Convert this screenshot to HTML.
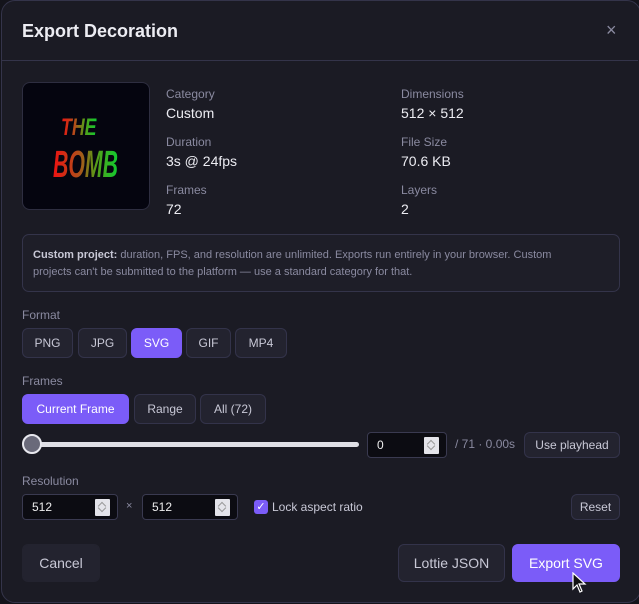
<!DOCTYPE html>
<html><head><meta charset="utf-8"><style>
*{box-sizing:border-box;margin:0;padding:0}
body{width:639px;height:604px;background:#14141b;font-family:"Liberation Sans",sans-serif;overflow:hidden;position:relative}
.dlg{position:absolute;left:1px;top:0;width:640px;height:603px;background:#1b1b24;border:1px solid #34344a;border-radius:14px}
.a{position:absolute;white-space:nowrap}
.lbl{color:#8a8aa0;font-size:12px}
.val{color:#ececf2;font-size:14px}
.btn{position:absolute;background:#23232f;border:1px solid #33334a;border-radius:6px;color:#c8c8d6;font-size:12px;display:flex;align-items:center;justify-content:center}
.on{background:#7b5cf8;border-color:#7b5cf8;color:#fff}
.inp{position:absolute;background:#0c0c12;border:1px solid #3a3a50;border-radius:4px;color:#eee;font-size:12px;padding-left:9px;display:flex;align-items:center}
.spin{position:absolute;right:7px;top:4px;width:15px;height:17px;background:#e4e4ea;border-radius:1px}
.spin:before,.spin:after{content:"";position:absolute;left:4px;width:5px;height:5px;border-left:1px solid #999;border-top:1px solid #999}
.spin:before{top:4px;transform:rotate(45deg)}
.spin:after{top:6px;transform:rotate(225deg)}
.grad{background:linear-gradient(90deg,#ee1111,#b0501a 40%,#5a9a18 65%,#10cc30);-webkit-background-clip:text;background-clip:text;color:transparent;font-weight:bold;font-style:italic;transform-origin:left top}
</style></head><body>
<div class="dlg"></div>
<div class="a" style="left:22px;top:21px;font-size:18px;font-weight:bold;color:#ececf2">Export Decoration</div>
<div class="a" style="left:606px;top:20px;font-size:18px;color:#8a8aa0">×</div>
<div class="a" style="left:2px;top:60px;width:636px;height:1px;background:#34344a"></div>

<div class="a" style="left:22px;top:82px;width:128px;height:128px;background:#05050f;border:1px solid #2e2e40;border-radius:8px"></div>
<div class="a grad" style="left:61px;top:114px;font-size:24px;transform:scaleX(0.74)">THE</div>
<div class="a grad" style="left:53px;top:144px;font-size:38px;transform:scaleX(0.56)">BOMB</div>

<div class="a lbl" style="left:166px;top:87px">Category</div>
<div class="a val" style="left:166px;top:105px">Custom</div>
<div class="a lbl" style="left:166px;top:135px">Duration</div>
<div class="a val" style="left:166px;top:153px">3s @ 24fps</div>
<div class="a lbl" style="left:166px;top:183px">Frames</div>
<div class="a val" style="left:166px;top:201px">72</div>
<div class="a lbl" style="left:401px;top:87px">Dimensions</div>
<div class="a val" style="left:401px;top:105px">512 × 512</div>
<div class="a lbl" style="left:401px;top:135px">File Size</div>
<div class="a val" style="left:401px;top:153px">70.6 KB</div>
<div class="a lbl" style="left:401px;top:183px">Layers</div>
<div class="a val" style="left:401px;top:201px">2</div>

<div class="a" style="left:22px;top:234px;width:598px;height:58px;border:1px solid #34344a;border-radius:7px;background:#1e1e28;padding:12px 40px 12px 10px;font-size:11px;line-height:17px;color:#8a8aa0;white-space:normal"><b style="color:#c8c8d6">Custom project:</b> duration, FPS, and resolution are unlimited. Exports run entirely in your browser. Custom projects can't be submitted to the platform — use a standard category for that.</div>

<div class="a lbl" style="left:22px;top:308px">Format</div>
<div class="btn" style="left:22px;top:328px;width:51px;height:30px">PNG</div>
<div class="btn" style="left:78px;top:328px;width:49px;height:30px">JPG</div>
<div class="btn on" style="left:131px;top:328px;width:51px;height:30px">SVG</div>
<div class="btn" style="left:186px;top:328px;width:45px;height:30px">GIF</div>
<div class="btn" style="left:235px;top:328px;width:52px;height:30px">MP4</div>

<div class="a lbl" style="left:22px;top:374px">Frames</div>
<div class="btn on" style="left:22px;top:394px;width:107px;height:30px">Current Frame</div>
<div class="btn" style="left:134px;top:394px;width:62px;height:30px">Range</div>
<div class="btn" style="left:200px;top:394px;width:66px;height:30px">All (72)</div>

<div class="a" style="left:28px;top:442px;width:331px;height:5px;background:#e0e0e6;border-radius:3px"></div>
<div class="a" style="left:22px;top:434px;width:20px;height:20px;border-radius:50%;background:#6a6a7a;border:2px solid #e8e8ee"></div>
<div class="inp" style="left:367px;top:432px;width:80px;height:26px">0<div class="spin"></div></div>
<div class="a" style="left:455px;top:437px;font-size:12px;color:#8a8aa0">/ 71 · 0.00s</div>
<div class="btn" style="left:524px;top:432px;width:96px;height:26px">Use playhead</div>

<div class="a lbl" style="left:22px;top:474px">Resolution</div>
<div class="inp" style="left:22px;top:494px;width:96px;height:26px">512<div class="spin"></div></div>
<div class="a" style="left:126px;top:500px;font-size:11px;color:#8a8aa0">×</div>
<div class="inp" style="left:142px;top:494px;width:96px;height:26px">512<div class="spin"></div></div>
<div class="a" style="left:254px;top:500px;width:14px;height:14px;background:#7b5cf8;border-radius:3px;color:#fff;font-size:11px;line-height:14px;text-align:center">✓</div>
<div class="a" style="left:272px;top:500px;font-size:12px;color:#c8c8d6">Lock aspect ratio</div>
<div class="btn" style="left:571px;top:494px;width:49px;height:26px">Reset</div>

<div class="btn" style="left:22px;top:544px;width:78px;height:38px;border-color:#23232f;font-size:14px">Cancel</div>
<div class="btn" style="left:398px;top:544px;width:107px;height:38px;font-size:14px">Lottie JSON</div>
<div class="btn on" style="left:512px;top:544px;width:108px;height:38px;font-size:14px">Export SVG</div>
<svg class="a" style="left:572px;top:572px" width="16" height="22" viewBox="0 0 16 22"><path d="M1 1 L1 17 L5 13 L8 20 L10 19 L7 12 L13 12 Z" fill="#111" stroke="#fff" stroke-width="1.2"/></svg>
</body></html>
